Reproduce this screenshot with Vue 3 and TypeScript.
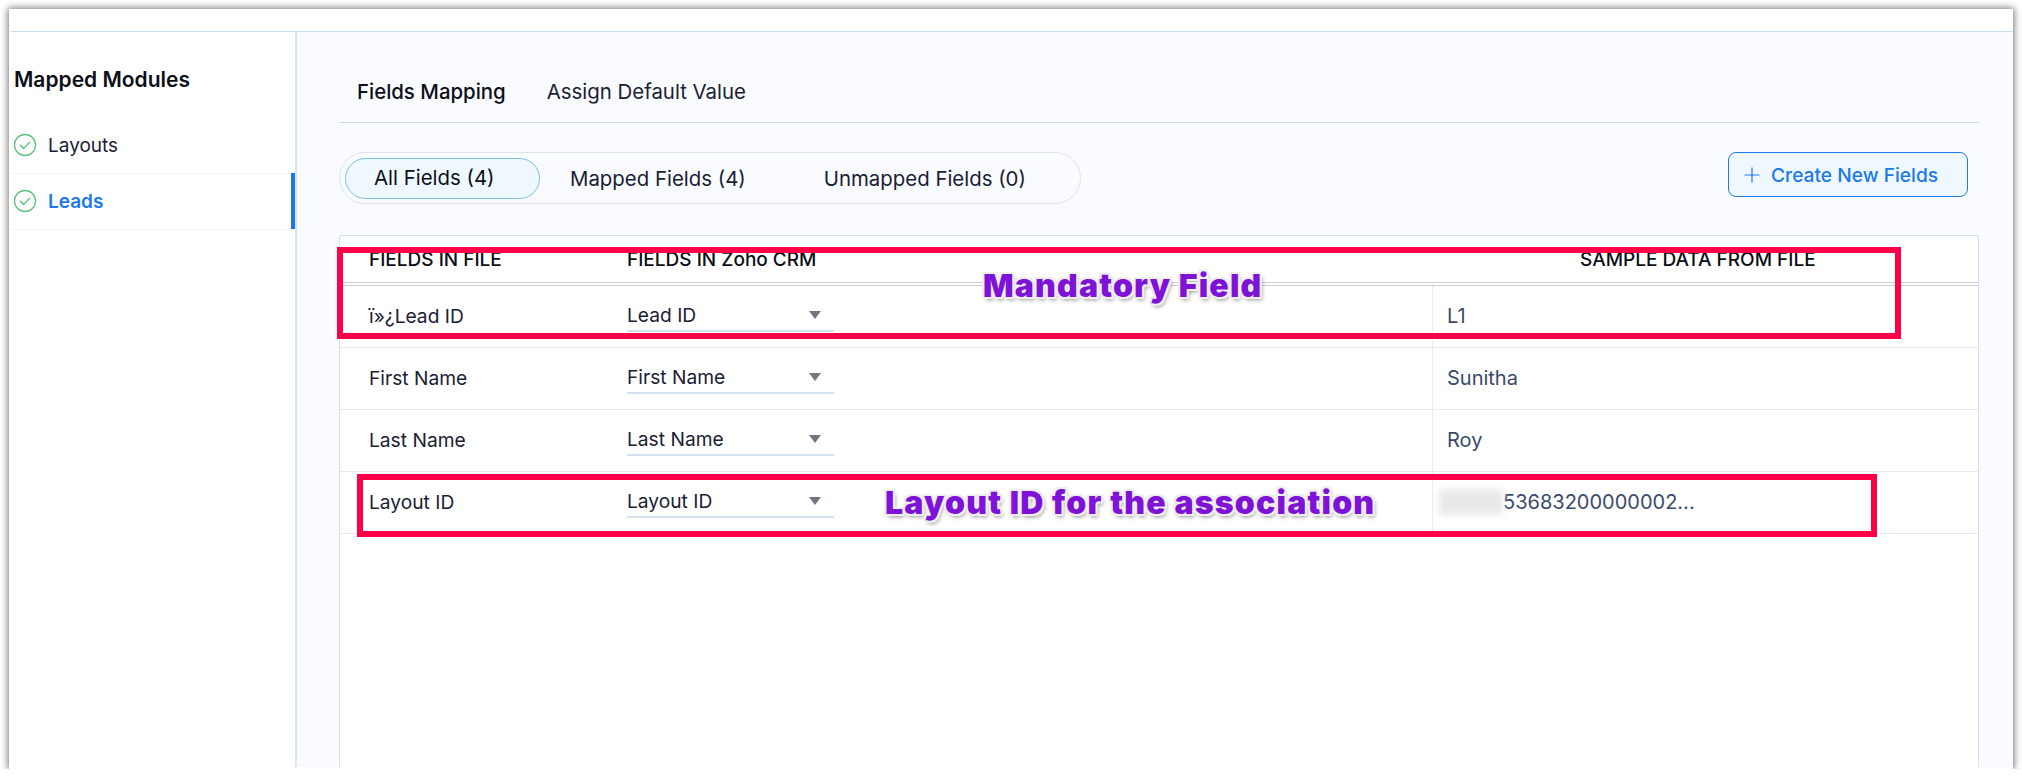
<script setup lang="ts">
interface FieldRow {
  source: string;
  target: string;
  sample: string;
  blurred?: boolean;
}

const modules = [
  { name: 'Layouts', active: false },
  { name: 'Leads', active: true },
];

const filters = ['All Fields (4)', 'Mapped Fields (4)', 'Unmapped Fields (0)'];

const rows: FieldRow[] = [
  { source: 'ï»¿Lead ID', target: 'Lead ID', sample: 'L1' },
  { source: 'First Name', target: 'First Name', sample: 'Sunitha' },
  { source: 'Last Name', target: 'Last Name', sample: 'Roy' },
  { source: 'Layout ID', target: 'Layout ID', sample: '53683200000002...', blurred: true },
];
</script>

<template>
  <div class="frame">
    <div class="topbar"></div>
    <div class="body">
      <aside class="sidebar">
        <h2 class="side-title">Mapped Modules</h2>
        <div v-for="m in modules" :key="m.name" class="module" :class="{ active: m.active }">
          <svg class="check" width="24" height="24" viewBox="0 0 24 24" fill="none">
            <circle cx="12" cy="12" r="10.5" stroke="#5fc07a" stroke-width="1.3" />
            <path d="M7.4 12.3l3.2 3.2 6-6.2" stroke="#5fc07a" stroke-width="1.3" stroke-linecap="round" stroke-linejoin="round" />
          </svg>
          <span>{{ m.name }}</span>
        </div>
      </aside>

      <main class="main">
        <nav class="tabs">
          <span class="tab current">Fields Mapping</span>
          <span class="tab">Assign Default Value</span>
        </nav>

        <div class="toolbar">
          <div class="pill">
            <span v-for="(f, i) in filters" :key="f" class="filter" :class="{ on: i === 0 }">{{ f }}</span>
          </div>
          <button class="create">
            <svg width="16" height="16" viewBox="0 0 16 16" fill="none">
              <path d="M8 0.5v15M0.5 8h15" stroke="#1a7ae8" stroke-width="1.2" />
            </svg>
            Create New Fields
          </button>
        </div>

        <div class="table">
          <div class="row head">
            <div class="cell">FIELDS IN FILE</div>
            <div class="cell">FIELDS IN Zoho CRM</div>
            <div class="cell sample-head">SAMPLE DATA FROM FILE</div>
          </div>
          <div v-for="r in rows" :key="r.source" class="row">
            <div class="cell">{{ r.source }}</div>
            <div class="cell">
              <div class="select">
                <span>{{ r.target }}</span>
                <i class="caret"></i>
              </div>
            </div>
            <div class="cell sample">
              <span v-if="r.blurred" class="blur"></span>{{ r.sample }}
            </div>
          </div>

          <div class="mark mark-mandatory"></div>
          <div class="mark mark-layout"></div>
          <div class="note note-mandatory">Mandatory Field</div>
          <div class="note note-layout">Layout ID for the association</div>
        </div>
      </main>
    </div>
  </div>
</template>

<style>
html,
body {
  background: #fff;
}
</style>

<style scoped>
.frame {
  box-sizing: border-box;
  width: 2004px;
  height: 760px;
  margin: 9px 0 0 9px;
  background: #fff;
  box-shadow: 0 0 7px 1px rgba(0, 0, 0, 0.55);
  display: flex;
  flex-direction: column;
  font-family: Inter, "Liberation Sans", sans-serif;
  color: #1a2035;
}

.topbar {
  height: 22px;
  margin-left: 2px;
  border-bottom: 1px solid #c9dcee;
  flex: none;
}

.body {
  flex: 1;
  display: flex;
  min-height: 0;
  margin-bottom: 2px;
}

.sidebar {
  width: 284px;
  margin-left: 2px;
  flex: none;
  border-right: 2px solid #d9e5f2;
}

.side-title {
  margin: 0;
  padding: 35px 0 0 3px;
  height: 50px;
  font-size: 21px;
  line-height: 26px;
  font-weight: 600;
  color: #0c0f18;
}

.module {
  height: 56px;
  display: flex;
  align-items: center;
  gap: 11px;
  padding-left: 2px;
  font-size: 19px;
  box-shadow: 0 1px 1px rgba(0, 0, 0, 0.04);
}

.module span {
  padding-top: 1px;
}

.module.active {
  color: #1a7ae8;
  font-weight: 600;
  border-right: 4px solid #1a7ae8;
}

.main {
  flex: 1;
  min-width: 0;
  box-sizing: border-box;
  padding: 0 34px 0 42px;
  background: #f9fbff;
  display: flex;
  flex-direction: column;
}

.tabs {
  height: 91px;
  box-sizing: border-box;
  padding: 28px 0 0 18px;
  border-bottom: 1px solid #c9dcee;
  display: flex;
  align-items: center;
  gap: 41px;
  font-size: 20.4px;
  flex: none;
}

.tab.current {
  color: #0c0f18;
  font-weight: 500;
}

.toolbar {
  margin-top: 29px;
  display: flex;
  justify-content: space-between;
  align-items: flex-start;
  padding-right: 11px;
  flex: none;
}

.pill {
  box-sizing: border-box;
  width: 742px;
  height: 52px;
  padding: 4px 5px;
  border: 1.5px solid #dfe5ee;
  border-radius: 26px;
  display: flex;
  align-items: center;
  font-size: 20.4px;
}

.filter {
  padding: 0 38px;
  height: 41px;
  line-height: 41px;
  border-radius: 21px;
  white-space: nowrap;
}

.filter:nth-child(2) {
  padding-left: 30px;
  padding-right: 40px;
}

.filter.on {
  box-sizing: border-box;
  width: 195px;
  flex: none;
  padding: 0 0 0 28px;
  border: 1.5px solid #79bfee;
  background: #f0f8ff;
  line-height: 38px;
  color: #0c0f18;
}

.create {
  box-sizing: border-box;
  width: 240px;
  height: 45px;
  padding: 0 0 0 15px;
  display: flex;
  align-items: center;
  gap: 11px;
  border: 1.5px solid #1a7ae8;
  border-radius: 8px;
  background: #f0f8ff;
  color: #1a7ae8;
  font: 500 19.2px Inter, "Liberation Sans", sans-serif;
}

.table {
  position: relative;
  flex: 1;
  margin-top: 31px;
  background: #fff;
  border: 1px solid #d4e0ec;
  border-bottom: 0;
  border-radius: 3px 3px 0 0;
  font-size: 19.2px;
}

.row {
  display: grid;
  grid-template-columns: 287px 805px 1fr;
  height: 62px;
  box-sizing: border-box;
  border-bottom: 1px solid #e4ebf3;
}

.row.head {
  height: 50px;
  border-bottom: 4px double #ccc;
  font-weight: 500;
  color: #0c0f18;
  font-size: 19px;
}

.cell {
  display: flex;
  align-items: center;
  padding-left: 29px;
  padding-bottom: 2px;
  min-width: 0;
}

.row.head .cell {
  padding-bottom: 0;
}

.row .cell:nth-child(2) {
  padding-left: 0;
}

.row .sample-head {
  padding-left: 148px;
}

.sample {
  border-left: 1px solid #e4ebf3;
  padding-left: 14px;
  font-size: 20px;
  color: #3a4a6b;
}

.select {
  box-sizing: border-box;
  width: 207px;
  height: 33px;
  display: flex;
  align-items: center;
  justify-content: space-between;
  border-bottom: 2px solid #d3e0ee;
  padding-right: 13px;
}

.caret {
  width: 0;
  height: 0;
  border-left: 6.5px solid transparent;
  border-right: 6.5px solid transparent;
  border-top: 8px solid #73767f;
}

.blur {
  width: 64px;
  height: 26px;
  margin-left: -8px;
  background: #e9e9ec;
  filter: blur(3px);
}

.mark {
  position: absolute;
  box-sizing: border-box;
  border: 6.5px solid #ff0048;
}

.mark-mandatory {
  left: -3px;
  top: 11px;
  width: 1564px;
  height: 92px;
}

.mark-layout {
  left: 17px;
  top: 238px;
  width: 1520px;
  height: 63px;
}

.note {
  position: absolute;
  font-family: Inter, sans-serif;
  font-weight: 900;
  font-size: 32px;
  line-height: 38px;
  letter-spacing: 1.2px;
  white-space: nowrap;
  color: #7e12d6;
  text-shadow:
    -2px 0 #eee, 2px 0 #eee, 0 -2px #eee, 0 2px #eee,
    -2px -2px #eee, 2px -2px #eee, -2px 2px #eee, 2px 2px #eee,
    2px 3px 4px rgba(0, 0, 0, 0.45);
}

.note-mandatory {
  left: 643px;
  top: 31px;
}

.note-layout {
  left: 545px;
  top: 248px;
}
</style>
